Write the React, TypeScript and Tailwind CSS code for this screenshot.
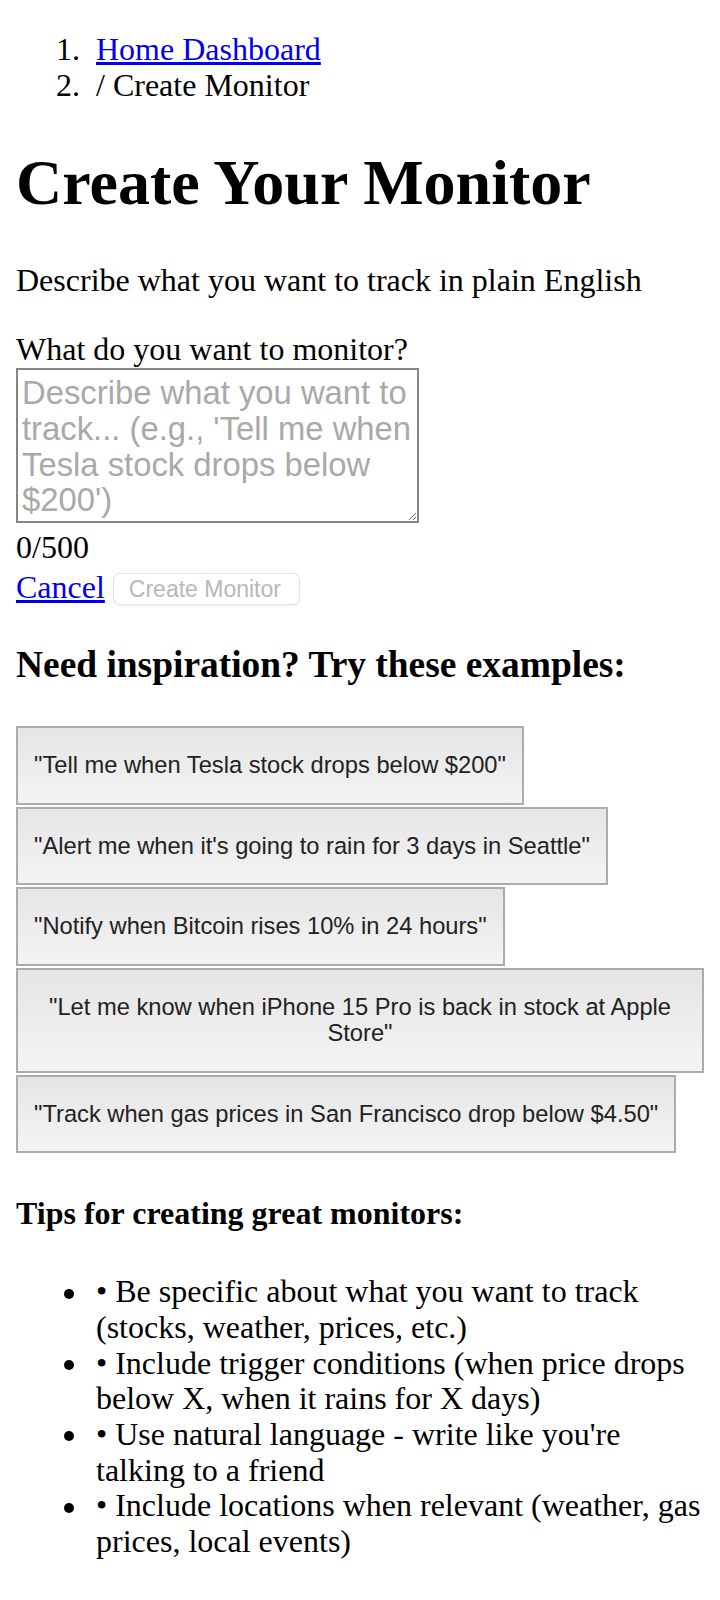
import React, { useState } from "react";

const examples = [
  '"Tell me when Tesla stock drops below $200"',
  '"Alert me when it\'s going to rain for 3 days in Seattle"',
  '"Notify when Bitcoin rises 10% in 24 hours"',
  '"Let me know when iPhone 15 Pro is back in stock at Apple Store"',
  '"Track when gas prices in San Francisco drop below $4.50"',
];

const tips = [
  "• Be specific about what you want to track (stocks, weather, prices, etc.)",
  "• Include trigger conditions (when price drops below X, when it rains for X days)",
  "• Use natural language - write like you're talking to a friend",
  "• Include locations when relevant (weather, gas prices, local events)",
];

export default function App() {
  const [text, setText] = useState("");
  return (
    <div className="bg-white min-h-[1600px] px-4 py-px font-['Liberation_Serif','Times_New_Roman',serif] text-[32px] leading-[35.7px] text-black">
      <nav>
        <ol className="pl-[80px] my-[31px]">
          <li className="flex">
            <span className="shrink-0 w-[48px] -ml-[48px] pr-[16px] text-right">1.</span>
            <a href="#" className="text-[#0000ee] underline">
              Home Dashboard
            </a>
          </li>
          <li className="flex">
            <span className="shrink-0 w-[48px] -ml-[48px] pr-[16px] text-right">2.</span>
            <span>/ Create Monitor</span>
          </li>
        </ol>
      </nav>
      <h1 className="text-[64px] leading-[73.6px] font-bold my-[42.88px]">Create Your Monitor</h1>
      <p className="mt-[42.88px] mb-[34px]">Describe what you want to track in plain English</p>
      <div>
        <label htmlFor="q" className="block">
          What do you want to monitor?
        </label>
        <textarea
          id="q"
          rows={4}
          value={text}
          onChange={(e) => setText(e.target.value)}
          placeholder="Describe what you want to track... (e.g., 'Tell me when Tesla stock drops below $200')"
          className="block w-[403px] h-[155px] mb-[7px] border-2 border-[#858585] px-[4px] pt-[5px] pb-[3px] font-['Liberation_Sans',Arial,sans-serif] text-[32.8px] leading-[35.7px] text-black placeholder:text-[#a9a9a9] bg-white"
        />
        <div>{text.length}/500</div>
        <div className="mt-[4px]">
          <a href="#" className="text-[#0000ee] underline">
            Cancel
          </a>{" "}
          <button
            disabled
            className="inline-block align-[1px] h-[32px] pl-[15px] pr-[18px] rounded-[7px] border border-[#e3e3e3] bg-white shadow-[0_1px_2px_rgba(0,0,0,0.08)] font-['Liberation_Sans',Arial,sans-serif] text-[23px] leading-[30px] text-[#b8b8b8]"
          >
            Create Monitor
          </button>
        </div>
      </div>
      <h3 className="text-[37.44px] leading-[43px] font-bold my-[37.44px]">
        Need inspiration? Try these examples:
      </h3>
      <div className="pt-[3px]">
        {examples.map((ex) => (
          <button
            key={ex}
            onClick={() => setText(ex.slice(1, -1))}
            className="block w-fit max-w-full mb-[2px] border-2 border-[#acacac] bg-gradient-to-b from-[#e5e5e5] to-[#f4f4f4] px-[16px] py-[24px] text-center font-['Liberation_Sans',Arial,sans-serif] text-[23.7px] leading-[26.5px] text-[#222]"
          >
            {ex}
          </button>
        ))}
      </div>
      <h4 className="text-[32px] leading-[35.7px] font-bold my-[42.56px]">Tips for creating great monitors:</h4>
      <ul className="pl-[80px] my-[42.56px]">
        {tips.map((t) => (
          <li key={t} className="flex">
            <span className="shrink-0 w-[40px] -ml-[40px] h-[35.7px] flex items-center pl-[8px]">
              <span className="mt-[3px] w-[10px] h-[10px] rounded-full bg-black" />
            </span>
            <span>{t}</span>
          </li>
        ))}
      </ul>
    </div>
  );
}
